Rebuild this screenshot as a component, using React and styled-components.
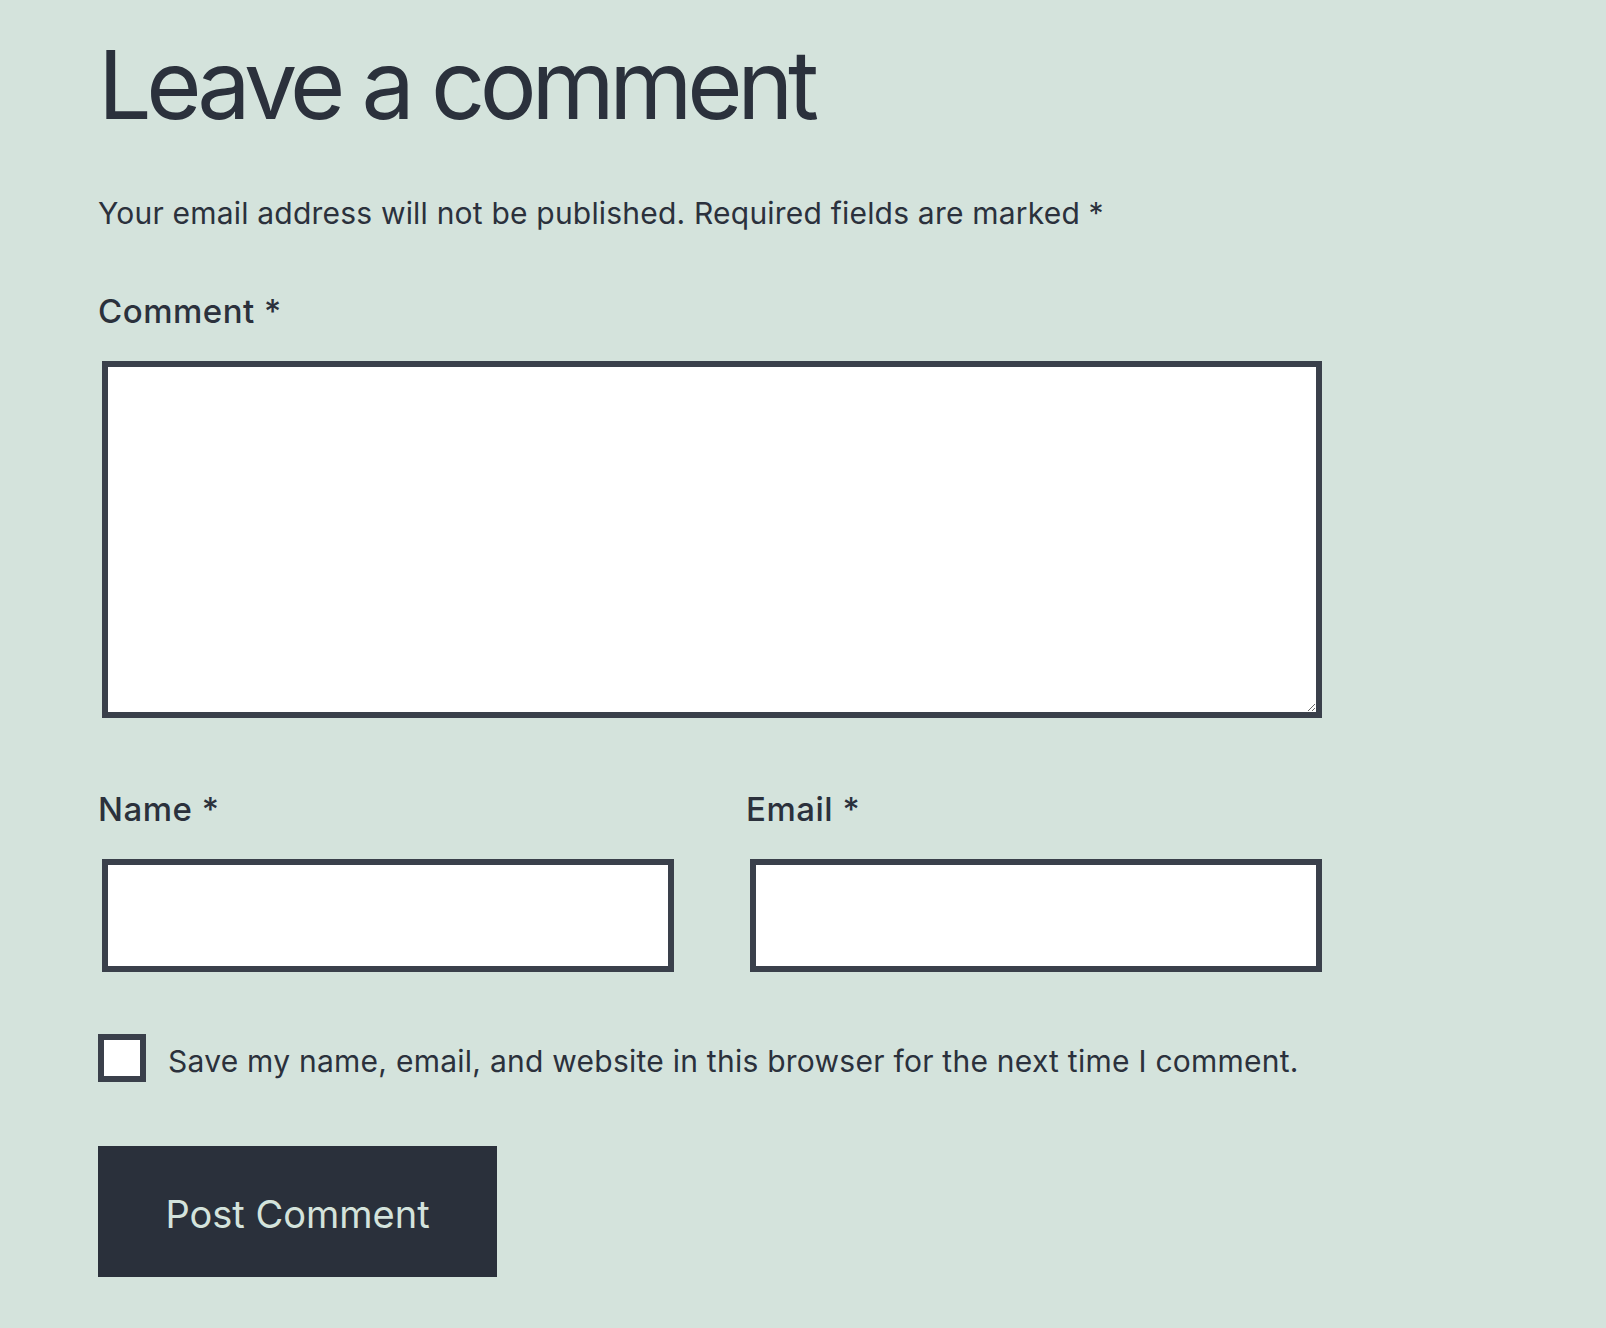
import styled, { createGlobalStyle } from "styled-components";

const GlobalStyle = createGlobalStyle`
  body {
    margin: 0;
    background: #d4e3dc;
    font-family: "Inter", "Noto Sans", sans-serif;
    color: #2b313c;
  }
`;

export default function App() {
  return (
    <>
      <GlobalStyle />
      <Wrapper>
        <Titulo>Leave a comment</Titulo>
        <Aviso>
          Your email address will not be published. Required fields are marked *
        </Aviso>
        <form onSubmit={(e) => e.preventDefault()}>
          <Campo>
            <Rotulo htmlFor="comment">Comment *</Rotulo>
            <AreaTexto id="comment" />
          </Campo>
          <Linha>
            <Campo>
              <Rotulo htmlFor="author">Name *</Rotulo>
              <Entrada id="author" type="text" />
            </Campo>
            <Campo>
              <Rotulo htmlFor="email">Email *</Rotulo>
              <Entrada id="email" type="email" />
            </Campo>
          </Linha>
          <LinhaCheck>
            <Caixa id="save" type="checkbox" />
            <TextoCheck htmlFor="save">
              Save my name, email, and website in this browser for the next time I comment.
            </TextoCheck>
          </LinhaCheck>
          <Botao type="submit">Post Comment</Botao>
        </form>
      </Wrapper>
    </>
  );
}

const Wrapper = styled.div`
  width: 1228px;
  padding: 28px 0 40px 98px;
`;

const Titulo = styled.h1`
  margin: 0;
  font-size: 95px;
  font-weight: 400;
  line-height: 1.2;
  letter-spacing: -5.35px;
`;

const Aviso = styled.p`
  margin: 50px 0 0;
  font-size: 30px;
  line-height: 1.4;
  letter-spacing: 0.2px;
`;

const Campo = styled.div`
  display: flex;
  flex-direction: column;
  margin-top: 56px;
`;

const Rotulo = styled.label`
  font-size: 33px;
  font-weight: 500;
  line-height: 1.3;
  letter-spacing: 0.5px;
  margin-bottom: 28px;
`;

const AreaTexto = styled.textarea`
  box-sizing: border-box;
  margin: 0 4px;
  height: 357px;
  border: 6px solid #3a404b;
  background: #fff;
  resize: vertical;
  font: inherit;
`;

const Linha = styled.div`
  display: grid;
  grid-template-columns: 1fr 1fr;
  column-gap: 68px;
  margin-top: 70px;

  & > div {
    margin-top: 0;
  }
`;

const Entrada = styled.input`
  box-sizing: border-box;
  margin: 0 4px;
  height: 113px;
  border: 6px solid #3a404b;
  background: #fff;
  font: inherit;
`;

const LinhaCheck = styled.div`
  display: flex;
  align-items: center;
  gap: 22px;
  margin-top: 62px;
`;

const Caixa = styled.input`
  appearance: none;
  box-sizing: border-box;
  flex: none;
  margin: 0;
  width: 48px;
  height: 48px;
  border: 6px solid #3a404b;
  background: #fff;
`;

const TextoCheck = styled.label`
  font-size: 30px;
  line-height: 1.4;
  letter-spacing: 0.25px;
  padding-top: 6px;
`;

const Botao = styled.button`
  display: block;
  margin-top: 64px;
  width: 399px;
  height: 131px;
  padding-top: 6px;
  border: none;
  background: #2a303b;
  color: #d4e3dc;
  font-family: "Inter", "Noto Sans", sans-serif;
  font-size: 38px;
  cursor: pointer;
`;
